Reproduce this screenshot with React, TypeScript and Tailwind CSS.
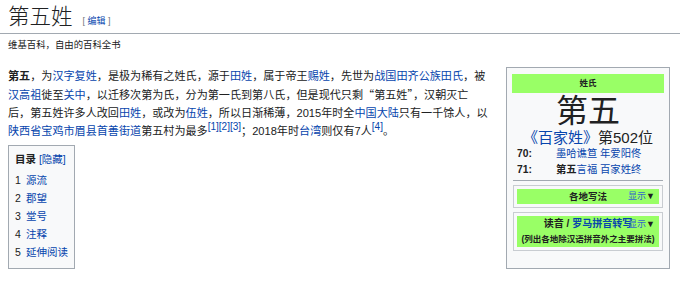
const A = ({ children }: { children: React.ReactNode }) => (
  <span className="text-[#0645ad]">{children}</span>
);

const Sup = ({ children }: { children: React.ReactNode }) => (
  <sup className="text-[10px] text-[#0645ad]">{children}</sup>
);

const Q = ({ children }: { children: React.ReactNode }) => (
  <span className="font-['Noto_Sans_CJK_SC',sans-serif]">{children}</span>
);

const toc = ["源流", "郡望", "堂号", "注释", "延伸阅读"];

function Infobox() {
  return (
    <div className="w-[164px] shrink-0 border border-[#a2a9b1] bg-[#f8f9fa] px-[5px] pt-[6px] pb-[5px] text-[#202122]">
      <div className="h-[19px] bg-[#99ff66] text-center text-[8.5px] font-bold leading-[19px]">姓氏</div>
      <div className="text-center text-[32px] leading-[36px]">第五</div>
      <div className="text-center text-[15px] leading-[17px]">
        <A>《百家姓》</A>第502位
      </div>
      <div className="grid grid-cols-[39px_1fr] pl-[5px] text-[10.3px] leading-[16px]">
        <span className="font-bold">70:</span>
        <span>
          <A>墨哈谯笪</A> <A>年爱阳佟</A>
        </span>
        <span className="font-bold">71:</span>
        <span>
          <b>第五</b>
          <A>言福</A> <A>百家姓终</A>
        </span>
      </div>
      <div className="mx-[1px] mt-[2px] border-t border-[#a2a9b1]" />
      <div className="mx-[1px] mt-[4px] border border-[#c8ccd1] p-[3px]">
        <div className="relative h-[15px] bg-[#99ff66] text-center text-[9.5px] font-bold leading-[15px]">
          各地写法
          <span className="absolute right-[4px] top-0 text-[9px] font-normal">
            <span className="text-[#3366cc]">显示</span>▼
          </span>
        </div>
      </div>
      <div className="mx-[1px] mt-[4px] border border-[#c8ccd1] p-[3px]">
        <div className="relative bg-[#99ff66] text-center font-bold">
          <div className="text-[10px] leading-[16px]">
            读音 / <A>罗马拼音转写</A>
          </div>
          <div className="whitespace-nowrap text-[8.5px] leading-[15px]">(列出各地除汉语拼音外之主要拼法)</div>
          <span className="absolute right-[4px] top-0 text-[9px] font-normal leading-[16px]">
            <span className="text-[#3366cc]">显示</span>▼
          </span>
        </div>
      </div>
    </div>
  );
}

export default function App() {
  return (
    <div className="h-[283px] w-[680px] overflow-hidden bg-white font-['Liberation_Sans','Noto_Sans_CJK_SC',sans-serif] text-[#202122]">
      <div className="flex h-[34px] items-baseline border-b border-[#a2a9b1] pl-[8px] pt-[4px]">
        <h1 className="font-['Liberation_Serif','Noto_Sans_CJK_SC',serif] text-[21.5px] font-light leading-[26px]">
          第五姓
        </h1>
        <span className="ml-[10px] text-[9px] text-[#72777d]">
          [ <A>编辑</A> ]
        </span>
      </div>
      <div className="mt-[5px] pl-[8px] text-[9.4px] leading-[12px]">维基百科，自由的百科全书</div>

      <div className="mt-[16px] flex gap-[8px] pl-[8px] pr-[10px]">
        <div className="min-w-0 flex-1">
          <p className="whitespace-nowrap text-[11.1px] leading-[18px]">
            <b>第五</b>，为<A>汉字复姓</A>，是极为稀有之姓氏，源于<A>田姓</A>，属于帝王<A>赐姓</A>，先世为
            <A>战国</A>
            <A>田齐</A>
            <A>公族</A>
            <A>田氏</A>，被
            <br />
            <A>汉高祖</A>徙至<A>关中</A>，以迁移次第为氏，分为第一氏到第八氏，但是现代只剩<Q>“第五姓”</Q>，汉朝灭亡
            <br />
            后，第五姓许多人改回<A>田姓</A>，或改为<A>伍姓</A>，所以日渐稀薄，2015年时全<A>中国大陆</A>只有一千馀人，以
            <br />
            <A>陕西省宝鸡市眉县首善街道</A>第五村为最多<Sup>[1][2][3]</Sup>；2018年时<A>台湾</A>则仅有7人<Sup>[4]</Sup>。
          </p>

          <div className="mt-[5px] inline-block border border-[#a2a9b1] bg-[#f8f9fa] px-[6px] pt-[6px] pb-[7px] text-[10.5px]">
            <div className="mb-[5px] leading-[14px]">
              <b>目录</b> <span className="text-[#0645ad]">[隐藏]</span>
            </div>
            {toc.map((t, i) => (
              <div key={t} className="flex leading-[18px]">
                <span className="w-[11px]">{i + 1}</span>
                <A>{t}</A>
              </div>
            ))}
          </div>
        </div>
        <Infobox />
      </div>
    </div>
  );
}
